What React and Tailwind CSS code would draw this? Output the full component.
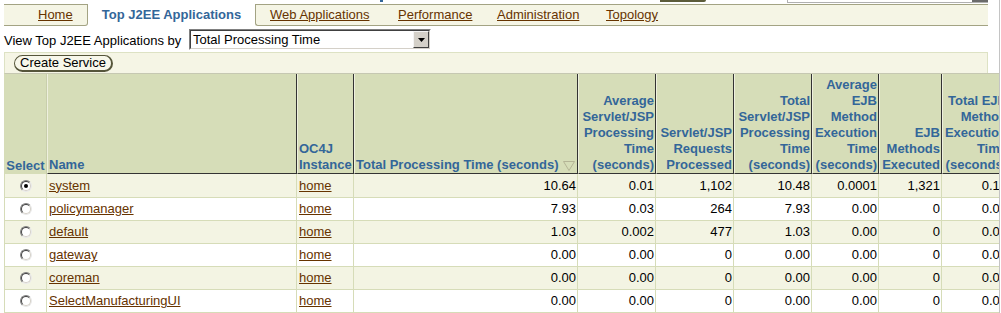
import React from "react";

const rows = [
  ["system", "10.64", "0.01", "1,102", "10.48", "0.0001", "1,321", "0.12", true],
  ["policymanager", "7.93", "0.03", "264", "7.93", "0.00", "0", "0.00"],
  ["default", "1.03", "0.002", "477", "1.03", "0.00", "0", "0.00"],
  ["gateway", "0.00", "0.00", "0", "0.00", "0.00", "0", "0.00"],
  ["coreman", "0.00", "0.00", "0", "0.00", "0.00", "0", "0.00"],
  ["SelectManufacturingUI", "0.00", "0.00", "0", "0.00", "0.00", "0", "0.00"],
];

const hdr =
  "h-[100px] bg-[#d6ddb8] border-l border-l-[#eef0de] border-r border-r-[#333333] border-b border-b-[#333333] flex flex-col justify-end px-[1px] leading-[16px] font-bold text-[#336699] whitespace-nowrap";

function Radio({ checked }) {
  return (
    <span className="relative flex h-[12px] w-[12px] items-center justify-center rounded-full border border-t-[#808080] border-l-[#808080] border-b-[#e8e8e8] border-r-[#e8e8e8] bg-white">
      <span className="flex h-[10px] w-[10px] items-center justify-center rounded-full border border-t-[#404040] border-l-[#404040] border-b-[#d4d0c8] border-r-[#d4d0c8] bg-white">
        {checked ? <span className="h-[4px] w-[4px] rounded-full bg-black" /> : null}
      </span>
    </span>
  );
}

export default function App() {
  return (
    <div className="relative h-[313px] w-[1001px] overflow-hidden bg-white font-['Liberation_Sans',Arial,sans-serif] text-[13px] text-black">
      {/* cut-off top strip */}
      <div className="flex h-[4px] items-start">
        <div className="ml-[380px] h-[2px] w-[3px] bg-[#336699]" />
        <div className="ml-[277px] h-[2px] w-[46px] rounded-br-[3px] bg-[#5c5c3a]" />
        <div className="ml-[81px] flex h-[3px] w-[201px] justify-end border-b border-l border-[#b0b0b0] bg-white">
          <div className="h-[2px] w-[16px] bg-[#6a6a6a]" />
        </div>
      </div>

      <div className="w-[988px] pl-[4px]">
        {/* tabs */}
        <div className="flex h-[22px]">
          <div className="flex w-[84px] items-center rounded-br-[3px] border-t border-b border-r border-[#a3a383] bg-[#f5f5e5] pl-[34px]">
            <a className="text-[#663300] underline underline-offset-[1px]">Home</a>
          </div>
          <div className="flex w-[167px] items-center justify-center bg-white font-bold text-[#336699]">
            Top J2EE Applications
          </div>
          <div className="flex flex-1 items-center rounded-bl-[3px] border-t border-b border-l border-[#a3a383] bg-[#f5f5e5] pl-[14px] text-[#663300]">
            <a className="w-[128px] underline underline-offset-[1px]">Web Applications</a>
            <a className="w-[99px] underline underline-offset-[1px]">Performance</a>
            <a className="w-[109px] underline underline-offset-[1px]">Administration</a>
            <a className="underline underline-offset-[1px]">Topology</a>
          </div>
        </div>

        {/* view by row */}
        <div className="flex h-[26px] items-center pt-[1px]">
          <span className="mt-[3px] w-[185px] whitespace-nowrap">View Top J2EE Applications by</span>
          <div className="flex h-[21px] w-[242px] border border-t-[#808080] border-l-[#808080] border-b-[#ffffff] border-r-[#ffffff]">
            <div className="flex flex-1 items-center border border-t-[#404040] border-l-[#404040] border-b-[#d4d0c8] border-r-[#d4d0c8] bg-white pl-[2px]">
              <span className="flex-1">Total Processing Time</span>
              <span className="flex h-[17px] w-[16px] items-center justify-center border border-t-[#f4f4f4] border-l-[#f4f4f4] border-b-[#404040] border-r-[#404040] bg-[#d4d0c8]">
                <svg width="7" height="4" viewBox="0 0 7 4">
                  <path d="M0 0H7L3.5 4Z" fill="#000" />
                </svg>
              </span>
            </div>
          </div>
        </div>

        {/* button band */}
        <div className="flex h-[21px] items-center border-t border-l border-r border-[#dde2c4] bg-[#f5f5e5] pl-[9px]">
          <button className="flex h-[17px] w-[99px] items-center justify-center rounded-full border border-[#55553a] border-b-2 border-r-2 bg-[#f7f7ea] leading-none text-black">
            Create Service
          </button>
        </div>

        {/* table */}
        <div className="grid w-max grid-cols-[42px_250px_57px_224px_78px_78px_78px_67px_63px_67px] border-t border-l border-t-[#c6c8b2] border-l-[#d6dcb8]">
          <div className="flex h-[100px] items-end justify-center border-r border-r-[#c8ceac] bg-[#d6ddb8] font-bold leading-[16px] text-[#336699]">
            Select
          </div>
          <div className={hdr}>Name</div>
          <div className={hdr}>
            <span>OC4J</span>
            <span>Instance</span>
          </div>
          <div className={hdr}>
            <span className="flex items-center">
              Total Processing Time (seconds)
              <svg className="ml-[4px]" width="12" height="11" viewBox="0 0 12 11">
                <path d="M0.5 1.5H11.5L6 10.5Z" fill="none" stroke="#b4b496" strokeWidth="1" />
              </svg>
            </span>
          </div>
          <div className={hdr + " text-right"}>
            <span>Average</span>
            <span>Servlet/JSP</span>
            <span>Processing</span>
            <span>Time</span>
            <span>(seconds)</span>
          </div>
          <div className={hdr + " text-right"}>
            <span>Servlet/JSP</span>
            <span>Requests</span>
            <span>Processed</span>
          </div>
          <div className={hdr + " text-right"}>
            <span>Total</span>
            <span>Servlet/JSP</span>
            <span>Processing</span>
            <span>Time</span>
            <span>(seconds)</span>
          </div>
          <div className={hdr + " text-right"}>
            <span>Average</span>
            <span>EJB</span>
            <span>Method</span>
            <span>Execution</span>
            <span>Time</span>
            <span>(seconds)</span>
          </div>
          <div className={hdr + " text-right"}>
            <span>EJB</span>
            <span>Methods</span>
            <span>Executed</span>
          </div>
          <div className={hdr + " text-right"}>
            <span>Total EJB</span>
            <span>Method</span>
            <span>Execution</span>
            <span>Time</span>
            <span>(seconds)</span>
          </div>

          {rows.map((r, i) => {
            const bg = i % 2 === 0 ? "bg-[#f3f4e3]" : "bg-white";
            const h = i === 0 ? "h-[24px]" : "h-[23px]";
            const cell = `${h} ${bg} border-r border-b border-[#d6dcb8] flex items-center whitespace-nowrap`;
            return (
              <React.Fragment key={r[0]}>
                <div className={cell + " justify-center"}>
                  <Radio checked={!!r[8]} />
                </div>
                <div className={cell + " pl-[2px]"}>
                  <a className="text-[#663300] underline underline-offset-[1px]">{r[0]}</a>
                </div>
                <div className={cell + " pl-[2px]"}>
                  <a className="text-[#663300] underline underline-offset-[1px]">home</a>
                </div>
                {r.slice(1, 8).map((v, j) => (
                  <div key={j} className={cell + " justify-end pr-[1px]"}>
                    {v}
                  </div>
                ))}
              </React.Fragment>
            );
          })}
        </div>
      </div>

      <div className="absolute top-0 right-0 bottom-0 w-[2px] border-l border-[#c4c4c4] bg-white" />
    </div>
  );
}
